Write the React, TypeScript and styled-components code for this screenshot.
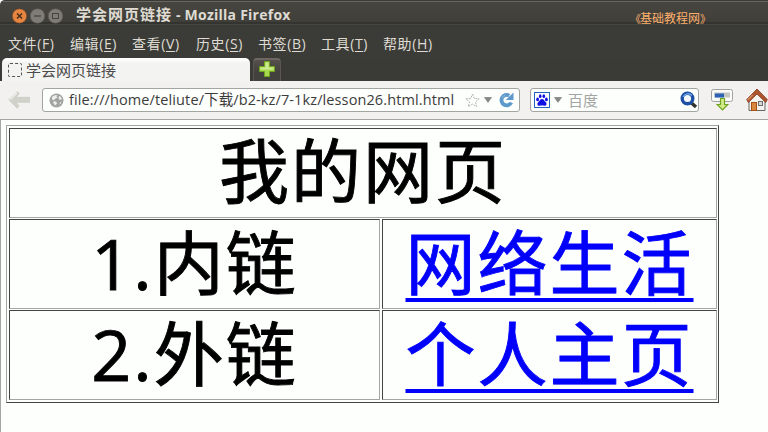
import React from "react";
import styled, { createGlobalStyle, css } from "styled-components";

const Global = createGlobalStyle`
  * { box-sizing: border-box; }
  body { margin: 0; background: #fdfffd; overflow: hidden; }
`;

const Window = styled.div`
  width: 768px;
  height: 432px;
  display: flex;
  flex-direction: column;
  background: #fdfffd;
  font-family: "Noto Sans", "Noto Sans CJK SC", sans-serif;
  font-size: 14px;
  white-space: nowrap;
  overflow: hidden;
`;

const TitleBar = styled.header`
  height: 27px;
  flex: none;
  display: flex;
  align-items: center;
  padding: 3px 0 0 12px;
  border-top: 1px solid #3b3a37;
  background: linear-gradient(#686764 0 1px, #46453f 1px, #403f3a 21px, #33342f 21px 23px, #46463f 23px 24px, #393a36 24px);
  border-radius: 5px 0 0 0;
`;

const TitleBackdrop = styled.div`
  flex: none;
  background: #fff;
`;

const WindowButtons = styled.svg`
  width: 54px;
  height: 18px;
  flex: none;
`;

const Title = styled.h1`
  margin: 0 0 2px 10px;
  width: 556px;
  font: bold 14px/20px "Open Sans", "Noto Sans CJK SC", sans-serif;
  letter-spacing: 0.25px;
  color: #dfdbd2;
`;

const TitlePage = styled.span`
  font-size: 15px;
  letter-spacing: 1px;
`;

const SiteMark = styled.span`
  display: flex;
  font: 12px/16px "Noto Sans CJK SC", sans-serif;
  color: #fdb06c;
  margin: 4px 0 0 1px;
`;

const MarkBracket = styled.span`
  width: 7px;
  display: flex;
  justify-content: flex-end;
  font-size: 11px;
  letter-spacing: -1px;
  &:last-child { justify-content: flex-start; }
`;

const MenuBar = styled.nav`
  height: 31px;
  flex: none;
  display: flex;
  align-items: center;
  padding: 2px 0 0 8px;
  gap: 14px;
  background: #3b3c38;
  color: #dfdbd2;
`;

const MenuItem = styled.span<{ $w: number }>`
  width: ${(p) => p.$w}px;
  font: 14px/20px "Open Sans", "Noto Sans CJK SC", sans-serif;
  letter-spacing: 0.6px;
  u { text-underline-offset: 2px; }
`;

const TabStrip = styled.div`
  height: 23px;
  flex: none;
  display: flex;
  align-items: flex-end;
  gap: 3px;
  padding-left: 2px;
  background: #3a3b37;
`;

const Tab = styled.div`
  width: 248px;
  height: 23px;
  display: flex;
  align-items: center;
  gap: 4px;
  padding: 0 0 0 6px;
  border-radius: 5px 5px 0 0;
  background: linear-gradient(#fdfdfc 0 2px, #f3f3f2 5px);
  color: #4c4c4c;
  font: 15px/20px "Noto Sans CJK SC", sans-serif;
`;

const Placeholder = styled.span`
  width: 14px;
  height: 14px;
  border: 1px dashed #555;
  border-radius: 2px;
`;

const NewTab = styled.div`
  width: 28px;
  height: 23px;
  display: flex;
  justify-content: center;
  align-items: flex-start;
  padding-top: 1px;
  border: 1px solid #5c5652;
  border-top: 2px solid #6e6661;
  border-bottom: 0;
  border-radius: 4px 4px 0 0;
  background: linear-gradient(#55504c, #42413d 60%);
`;

const Toolbar = styled.div`
  height: 39px;
  flex: none;
  display: flex;
  align-items: center;
  padding-left: 8px;
  background: #f2f1f0;
  border-bottom: 1px solid #a5a6a4;
`;

const fieldBox = css`
  height: 24px;
  flex: none;
  display: flex;
  align-items: center;
  border: 1px solid #a3a5a1;
  border-radius: 3px;
  background: #fdfffd;
`;

const AddressBar = styled.div`
  ${fieldBox}
  width: 478px;
  margin-left: 12px;
  padding-left: 6px;
`;

const Url = styled.span`
  width: 396px;
  margin-left: 5px;
  font: 14.5px/20px "Open Sans", "Noto Sans CJK SC", sans-serif;
  letter-spacing: 0.11px;
  color: #3c3c3c;
`;

const SearchBar = styled.div`
  ${fieldBox}
  width: 169px;
  margin-left: 10px;
  padding-left: 3px;
`;

const SearchHint = styled.span`
  width: 112px;
  margin-left: 6px;
  font: 15px/20px "Noto Sans CJK SC", sans-serif;
  color: #a3a5a3;
`;

const Icon = styled.svg<{ $gap?: number }>`
  flex: none;
  display: block;
  margin-left: ${(p) => p.$gap ?? 0}px;
`;

const Page = styled.main`
  flex: 1;
  padding: 5px 0 0 5px;
  border-left: 1px solid #a5a6a4;
`;

const LessonTable = styled.div`
  width: 713px;
  height: 278px;
  display: grid;
  grid-template-columns: 371px 335px;
  grid-template-rows: repeat(3, 90px);
  gap: 1px 2px;
  padding: 2px;
  border: 1px solid;
  border-color: #a5a6a4 #434543 #434543 #a5a6a4;
`;

const Cell = styled.div<{ $wide?: boolean }>`
  grid-column: ${(p) => (p.$wide ? "1 / 3" : "auto")};
  display: flex;
  justify-content: center;
  border: 1px solid;
  border-color: #434543 #a5a6a4 #a5a6a4 #434543;
  font: 70px/${(p) => (p.$wide ? 84 : 86)}px "Open Sans", "Noto Sans CJK SC", sans-serif;
  letter-spacing: 2px;
  -webkit-text-stroke: 0.9px currentColor;
  color: #000;
`;

const PageLink = styled.a`
  color: #0000fb;
  text-decoration: underline;
  text-decoration-thickness: 4px;
  text-underline-offset: 8px;
  text-decoration-skip-ink: none;
`;

const menus = [
  { name: "文件", key: "F", w: 48 },
  { name: "编辑", key: "E", w: 48 },
  { name: "查看", key: "V", w: 50 },
  { name: "历史", key: "S", w: 48 },
  { name: "书签", key: "B", w: 49 },
  { name: "工具", key: "T", w: 48 },
  { name: "帮助", key: "H", w: 50 },
];

const lessons = [
  { label: "1.内链", link: "网络生活" },
  { label: "2.外链", link: "个人主页" },
];

const DropArrow = ({ gap }: { gap: number }) => (
  <Icon $gap={gap} width="8" height="6" viewBox="0 0 8 6">
    <path d="M0.5 0.5h7L4 5.3z" fill="#888985" stroke="#70716d" strokeWidth=".6" />
  </Icon>
);

export default function App() {
  return (
    <Window>
      <Global />
      <TitleBackdrop>
        <TitleBar>
          <WindowButtons viewBox="0 0 54 18">
            <circle cx="7.5" cy="9" r="7.3" fill="#e58540" stroke="#5a3b25" strokeWidth=".6" />
            <path d="M5 6.500l5 5M10 6.500l-5 5" stroke="#48301e" strokeWidth="1.500" />
            <circle cx="25.500" cy="9" r="7.300" fill="#7f7c77" stroke="#565450" strokeWidth=".6" />
            <path d="M22 9h7" stroke="#45443f" strokeWidth="1.300" />
            <circle cx="43.500" cy="9" r="7.300" fill="#7f7c77" stroke="#565450" strokeWidth=".6" />
            <rect x="40.500" y="6.500" width="6" height="5" fill="none" stroke="#45443f" />
          </WindowButtons>
          <Title><TitlePage>学会网页链接</TitlePage> - Mozilla Firefox</Title>
          <SiteMark><MarkBracket>《</MarkBracket>基础教程网<MarkBracket>》</MarkBracket></SiteMark>
        </TitleBar>
      </TitleBackdrop>
      <MenuBar>
        {menus.map((m) => (
          <MenuItem key={m.key} $w={m.w}>{m.name}(<u>{m.key}</u>)</MenuItem>
        ))}
      </MenuBar>
      <TabStrip>
        <Tab><Placeholder />学会网页链接</Tab>
        <NewTab>
          <Icon width="16" height="16" viewBox="0 0 16 16">
            <path d="M5.500.500h5v5h5v5h-5v5h-5v-5h-5v-5h5z" fill="#a9d94f" stroke="#71a61c" />
            <path d="M6.500 1.500h3v5h5v2h-13v-2h5z" fill="#cdeb91" />
          </Icon>
        </NewTab>
      </TabStrip>
      <Toolbar>
        <Icon width="22" height="18" viewBox="0 0 22 18">
          <path d="M9.500 0.800L.8 8.800l8.400 8.400 1.800-2.400-3-3.500h13.500v-5H8l3.200-3.700z" fill="#d1d2ca" stroke="#c6c7bf" strokeWidth=".7" />
          <path d="M9 2L2 8.700" stroke="#eeeeea" strokeWidth="1.400" />
        </Icon>
        <AddressBar>
          <Icon width="15" height="15" viewBox="0 0 15 15">
            <circle cx="7.500" cy="7.500" r="7" fill="#a2a4a1" />
            <path d="M3 4l2-1.500 3-.5-.5 1.500 1 1-2 1-1.500 1.500-2-.5zM10 3l1.500.5L13 6l-2 1-1.500-1.500zM5 8l2.500 1 .5 1.500-2 2-1-1.500-1-1.500zM11 9.500l1.500-.5-1 2-1 .5z" fill="#eceeeb" />
          </Icon>
          <Url>file:///home/teliute/下载/b2-kz/7-1kz/lesson26.html.html</Url>
          <Icon width="15" height="15" viewBox="0 0 15 15">
            <path d="M7.500 1l1.900 4.500 4.800.3-3.700 3.100 1.200 4.800-4.200-2.600-4.200 2.600 1.200-4.800L.8 5.800l4.800-.3z" fill="#fdfffd" stroke="#b1b2ae" strokeDasharray="2 1" />
          </Icon>
          <DropArrow gap={4} />
          <Icon $gap={6} width="16" height="16" viewBox="0 0 16 16">
            <path d="M11.200 3.600A5.200 5.200 0 1 0 13.300 10.500" fill="none" stroke="#5d99ca" strokeWidth="3.800" />
            <path d="M15.500.4v7.600H7.800z" fill="#5d99ca" />
            <path d="M4 6a4.500 4.500 0 0 1 3-2.500" fill="none" stroke="#93bddf" />
          </Icon>
        </AddressBar>
        <SearchBar>
          <Icon width="16" height="16" viewBox="0 0 16 16">
            <rect x=".5" y=".5" width="15" height="15" fill="#fff" stroke="#2362bd" />
            <g fill="#1010e6">
              <ellipse cx="3.600" cy="7.400" rx="1.400" ry="1.900" /><ellipse cx="6.200" cy="4.200" rx="1.300" ry="1.900" />
              <ellipse cx="9.800" cy="4.200" rx="1.300" ry="1.900" /><ellipse cx="12.400" cy="7.400" rx="1.400" ry="1.900" />
              <path d="M8 7c1.800 0 2.500 2 3.800 3.300 1.600 1.600.6 3.700-1.300 3.500-1.500-.3-3.300-.3-5 0-2 .2-2.900-1.900-1.300-3.500C5.500 9 6.200 7 8 7z" />
            </g>
          </Icon>
          <DropArrow gap={4} />
          <SearchHint>百度</SearchHint>
          <Icon width="18" height="18" viewBox="0 0 18 18">
            <path d="M11.500 12l4.500 4" stroke="#333431" strokeWidth="3.500" />
            <circle cx="7.500" cy="7.500" r="5.300" fill="#f4f8fb" stroke="#1d4fa5" strokeWidth="3.400" />
            <path d="M3 6a5.500 5.500 0 0 1 9-1.500" fill="none" stroke="#6da4e3" strokeWidth="1.400" />
          </Icon>
        </SearchBar>
        <Icon $gap={12} width="22" height="24" viewBox="0 0 22 24">
          <rect x=".5" y="1.500" width="21" height="12" rx="2" fill="#fafbf9" stroke="#a0a29e" />
          <rect x="3" y="4.500" width="16" height="5" fill="#c4c6c1" />
          <rect x="4" y="5.500" width="9" height="4" fill="#2b62b6" />
          <path d="M9.500 10.500h4v6h3.300L11.500 22 6.200 16.500h3.300z" fill="#d4eb8b" stroke="#72a51e" strokeWidth="1.200" />
        </Icon>
        <Icon $gap={13} width="22" height="24" viewBox="0 0 22 24">
          <path d="M3 12.500L11 5l8 7.500V22.500H3z" fill="#f5f3ee" stroke="#686762" />
          <path d="M.7 11.500L11 1l10.300 10.500-1.500 3L11 6 2.300 14.500z" fill="#ad552e" stroke="#843719" strokeWidth=".8" />
          <path d="M1.700 12l5-5" stroke="#d28b64" strokeWidth="1.500" />
          <rect x="5.500" y="14.500" width="5" height="8" fill="#d9893d" stroke="#a75016" />
          <rect x="12.500" y="13.500" width="4" height="4" fill="#d3d7db" stroke="#6d706d" />
        </Icon>
      </Toolbar>
      <Page>
        <LessonTable>
          <Cell $wide>我的网页</Cell>
          {lessons.map((l) => (
            <React.Fragment key={l.label}>
              <Cell>{l.label}</Cell>
              <Cell><PageLink href="#">{l.link}</PageLink></Cell>
            </React.Fragment>
          ))}
        </LessonTable>
      </Page>
    </Window>
  );
}
